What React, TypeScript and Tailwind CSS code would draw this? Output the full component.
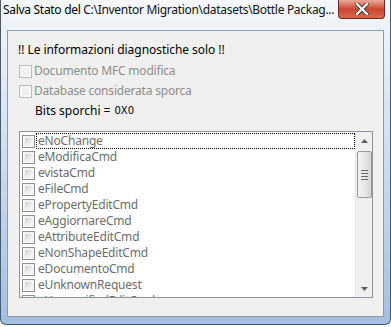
import React from "react";

const items = [
  "eNoChange",
  "eModificaCmd",
  "evistaCmd",
  "eFileCmd",
  "ePropertyEditCmd",
  "eAggiornareCmd",
  "eAttributeEditCmd",
  "eNonShapeEditCmd",
  "eDocumentoCmd",
  "eUnknownRequest",
  "eUnspecifiedEditCmd",
];

function Box({ disabled }: { disabled?: boolean }) {
  return (
    <div
      className={
        "w-[13px] h-[13px] shrink-0 border p-[2px] " +
        (disabled ? "border-[#bcbcbc] bg-[#f7f7f7]" : "border-[#8f8f8f] bg-[#f4f4f4]")
      }
    >
      <div
        className={
          "w-full h-full " +
          (disabled
            ? "bg-[#efefef]"
            : "bg-gradient-to-br from-[#d6d6d6] to-[#fbfbfb]")
        }
      />
    </div>
  );
}

export default function App() {
  return (
    <div
      className="w-[391px] h-[327px] bg-white overflow-hidden"
      style={{ fontFamily: '"Noto Sans", "Open Sans", sans-serif' }}
    >
      <div className="w-[391px] h-[325px] flex flex-col rounded-b-[6px] border border-t-0 border-[#4a5a6e] bg-gradient-to-b from-[#f5f7fa] via-[#cddcee] to-[#a4bfdf]">
        <div className="h-[30px] flex items-start justify-between shrink-0">
          <div className="pl-[2px] pt-[2px] text-[12px] leading-[16px] text-black whitespace-nowrap tracking-[-0.3px]">
            Salva Stato del <span className="text-[#101020]">C:\Inventor Migration\datasets\Bottle Packag...</span>
          </div>
          <div className="mr-[5px] w-[47px] h-[19px] shrink-0 rounded-b-[4px] border border-t-0 border-[#6e2a22] bg-gradient-to-b from-[#e9a99b] via-[#c9452f] to-[#d86a52] flex items-center justify-center">
            <svg width="14" height="12" viewBox="0 0 14 12">
              <path d="M2 1 L12 11 M12 1 L2 11" stroke="#3a3a3a" strokeWidth="4" strokeLinecap="square" />
              <path d="M2 1 L12 11 M12 1 L2 11" stroke="#ffffff" strokeWidth="2.2" strokeLinecap="square" />
            </svg>
          </div>
        </div>
        <div className="mx-[6px] h-[287px] shrink-0 border border-[#8b9bb0] bg-[#f0f0f0] flex flex-col text-[12px] leading-[16px]">
          <div className="ml-[10px] mt-[11px] text-black tracking-[-0.05px]">
            !! Le informazioni diagnostiche solo !!
          </div>
          <div className="ml-[11px] mt-[5px] h-[16px] flex items-center gap-[2px] text-[#8d8d8d] tracking-[-0.2px]">
            <Box disabled />
            <span>Documento MFC modifica</span>
          </div>
          <div className="ml-[11px] mt-[4px] h-[16px] flex items-center gap-[2px] text-[#8d8d8d] tracking-[-0.2px]">
            <Box disabled />
            <span>Database considerata sporca</span>
          </div>
          <div className="ml-[27px] mt-[4px] h-[16px] flex items-center text-black">
            <span>Bits sporchi =</span>
            <span className="ml-[4px] text-[10px]" style={{ fontFamily: '"DejaVu Sans", sans-serif' }}>0X0</span>
          </div>
          <div className="ml-[11px] mt-[12px] w-[354px] h-[167px] border border-[#8f949c] bg-white flex">
            <div className="flex-1 pt-[1px] overflow-hidden">
              {items.map((t, i) => (
                <div key={t} className="h-[16px] flex items-center pl-[1px]">
                  <div className="ml-[1px]"><Box /></div>
                  <div
                    className={
                      "ml-[1px] flex-1 h-[16px] flex items-center pl-[1px] text-[#6d6d6d] tracking-[-0.2px] whitespace-nowrap " +
                      (i === 0 ? "border border-dotted border-black" : "border border-transparent")
                    }
                  >
                    {t}
                  </div>
                </div>
              ))}
            </div>
            <div className="w-[17px] h-full bg-[#f0f0f0] border-l border-[#e6e6e6] flex flex-col items-center">
              <div className="h-[17px] w-full flex items-center justify-center">
                <svg width="7" height="4" viewBox="0 0 7 4"><path d="M3.5 0 L7 4 L0 4 Z" fill="#606060" /></svg>
              </div>
              <div className="mt-[2px] w-[15px] h-[47px] rounded-[2px] border border-[#9a9a9a] bg-gradient-to-r from-[#f4f4f4] via-[#e8e8e8] to-[#d4d4d4] flex flex-col items-center justify-center gap-[2px]">
                <div className="w-[7px] h-[1px] bg-[#6a6a6a]" />
                <div className="w-[7px] h-[1px] bg-[#6a6a6a]" />
                <div className="w-[7px] h-[1px] bg-[#6a6a6a]" />
                <div className="w-[7px] h-[1px] bg-[#6a6a6a]" />
              </div>
              <div className="flex-1" />
              <div className="h-[17px] w-full flex items-center justify-center">
                <svg width="7" height="4" viewBox="0 0 7 4"><path d="M0 0 L7 0 L3.5 4 Z" fill="#606060" /></svg>
              </div>
            </div>
          </div>
        </div>
      </div>
    </div>
  );
}
